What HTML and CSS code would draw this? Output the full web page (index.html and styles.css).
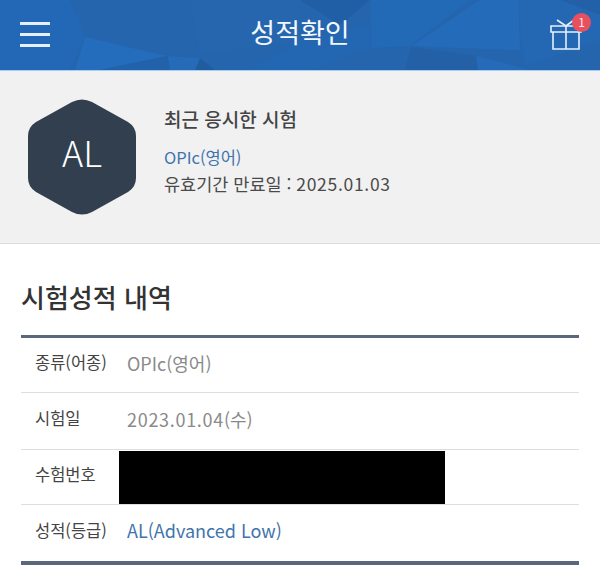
FILE: index.html
```html
<!DOCTYPE html>
<html lang="ko">

<head>
    <meta charset="UTF-8">
    <meta name="viewport" content="width=device-width, initial-scale=1.0">
    <title>성적확인</title>

    <link rel="stylesheet" href="styles.css">
</head>

<body>
    <header class="top">
        <svg class="top__bg" viewBox="0 0 600 70" width="600" height="70" preserveAspectRatio="none">
            <rect width="600" height="70" fill="#2465ae" />
            <polygon points="0,0 70,0 85,35 70,70 0,70" fill="#2268b6" />
            <polygon points="85,37 167,56 100,70 75,70" fill="#236dbc" />
            <polygon points="167,56 200,58 195,70 100,70" fill="#2262aa" />
            <polygon points="168,56 200,58 215,70 170,70" fill="#256bb8" />
            <polygon points="190,0 300,0 300,40 200,55" fill="#2666af" />
            <polygon points="200,58 215,70 195,70" fill="#1f5d9f" />
            <polygon points="300,40 370,24 372,48 310,70 250,70" fill="#2367b3" />
            <polygon points="370,0 470,0 410,46 372,48" fill="#2269b6" />
            <polygon points="412,46 480,0 518,0 520,50" fill="#246cba" />
            <polygon points="411,47 476,56 478,70 405,70" fill="#2360a6" />
            <polygon points="476,56 530,70 478,70" fill="#256bb9" />
            <polygon points="518,0 600,0 600,40 525,66" fill="#2468b4" />
            <polygon points="560,0 600,0 600,15" fill="#2260a8" />
            <polygon points="340,25 370,0 300,0" fill="#205fa6" />
        </svg>
        <span class="top__menu"><i></i><i></i><i></i></span>
        <h1 class="top__title">성적확인</h1>
        <span class="top__gift">
            <svg viewBox="0 0 32 31" width="32" height="31" fill="none" stroke="#e6f0fa" stroke-width="1.6">
                <path d="M1 7h30v6h-30z" />
                <path d="M3 13v17h26v-17" />
                <path d="M16 7v23" />
                <path d="M7 1l9 6 8-6" />
            </svg>
            <b class="top__badge">1</b>
        </span>
    </header>

    <section class="recent">
        <svg class="recent__hex" viewBox="0 0 108 116" width="108" height="116">
            <path d="M44 3 Q54 -2 64 3 L100 23 Q108 28 108 37 L108 79 Q108 88 100 93 L64 113 Q54 118 44 113 L8 93 Q0 88 0 79 L0 37 Q0 28 8 23 Z" fill="#323f4f" />
            <text x="54" y="68" text-anchor="middle" class="recent__grade">AL</text>
        </svg>
        <div class="recent__info">
            <h2 class="recent__title">최근 응시한 시험</h2>
            <p class="recent__exam">OPIc(영어)</p>
            <p class="recent__date">유효기간 만료일 : <span class="num">2025.01.03</span></p>
        </div>
    </section>

    <main class="history">
        <h2 class="history__title">시험성적 내역</h2>
        <div class="table">
            <div class="table__row">
                <span class="table__label">종류(어종)</span>
                <span class="table__value">OPIc(영어)</span>
            </div>
            <div class="table__row">
                <span class="table__label">시험일</span>
                <span class="table__value"><span class="num">2023.01.04</span>(수)</span>
            </div>
            <div class="table__row">
                <span class="table__label">수험번호</span>
                <span class="table__hidden"></span>
            </div>
            <div class="table__row">
                <span class="table__label">성적(등급)</span>
                <span class="table__value table__value--blue">AL(Advanced Low)</span>
            </div>
        </div>
    </main>
</body>

</html>
```

FILE: styles.css
```css
* {
    box-sizing: border-box;
}

body {
    margin: 0;
    background-color: #fff;
    font-family: "Noto Sans CJK KR", "Noto Sans", sans-serif;
    color: #444;
}

h1,
h2,
p {
    margin: 0;
    font-weight: normal;
}

.num {
    letter-spacing: .7px;
}

.top {
    position: relative;
    display: flex;
    align-items: center;
    justify-content: space-between;
    height: 71px;
    padding: 0 18px 1px 20px;
    border-bottom: 1px solid #a9cdf0;
    overflow: hidden;
}

.top__bg {
    position: absolute;
    top: 0;
    left: 0;
}

.top__menu {
    position: relative;
    display: flex;
    flex-direction: column;
    gap: 8px;
    width: 30px;
}

.top__menu i {
    display: block;
    height: 3px;
    background-color: #e6f0fa;
}

.top__title {
    position: relative;
    margin-bottom: 5px;
    font-size: 27px;
    font-weight: 400;
    line-height: 36px;
    color: #f2f7fc;
}

.top__gift {
    position: relative;
    width: 32px;
    height: 31px;
}

.top__gift svg {
    display: block;
}

.top__badge {
    position: absolute;
    top: -6px;
    right: -9px;
    width: 19px;
    height: 19px;
    border-radius: 50%;
    background-color: #e9505f;
    color: #fbe9ea;
    font-size: 12px;
    font-weight: 400;
    line-height: 18px;
    text-align: center;
}

.recent {
    display: flex;
    align-items: flex-start;
    gap: 28px;
    height: 173px;
    padding: 28px 28px 0;
    background-color: #f1f1f1;
    border-bottom: 1px solid #dcdcdc;
}

.recent__hex {
    flex: none;
}

.recent__grade {
    font-family: "Noto Sans CJK KR", sans-serif;
    font-size: 36px;
    font-weight: 300;
    fill: #fff;
}

.recent__info {
    padding-top: 7px;
}

.recent__title {
    font-size: 19px;
    font-weight: 500;
    line-height: 26px;
    color: #444;
}

.recent__exam {
    margin-top: 13px;
    font-size: 16.500px;
    line-height: 24px;
    color: #3f74ac;
}

.recent__date {
    margin-top: 2px;
    font-size: 17.500px;
    line-height: 26px;
    color: #4a4a4a;
}

.history {
    padding: 35px 21px 0;
}

.history__title {
    font-size: 26px;
    font-weight: 500;
    line-height: 36px;
    color: #333;
}

.table {
    margin-top: 20px;
    border-top: 3px solid #5a687c;
    border-bottom: 4px solid #5a687c;
}

.table__row {
    display: flex;
    align-items: center;
    height: 55px;
    padding-left: 14px;
    padding-bottom: 7px;
    border-bottom: 1px solid #dedede;
    font-size: 16.500px;
}

.table__row:nth-child(2) {
    height: 57px;
}

.table__row:nth-child(3) {
    align-items: stretch;
    height: 55px;
    padding-top: 1px;
    padding-bottom: 0;
}

.table__row:last-child {
    height: 56px;
    border-bottom: 0;
}

.table__label {
    width: 92px;
    color: #444;
}

.table__value {
    margin-top: 2px;
    font-size: 18px;
    color: #8a8a8a;
}

.table__value--blue {
    margin-top: 0;
    color: #3f74ac;
}

.table__row:nth-child(3) .table__label {
    align-self: center;
    width: 84px;
    margin-bottom: 8px;
}

.table__hidden {
    width: 326px;
    background-color: #000;
}
```
